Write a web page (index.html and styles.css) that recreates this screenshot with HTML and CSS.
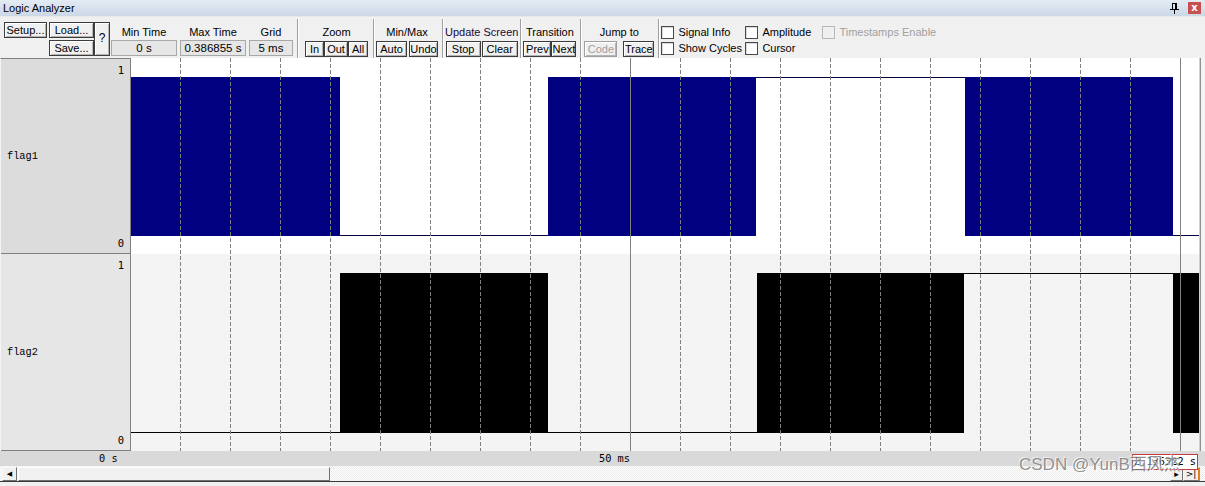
FILE: index.html
```html
<!DOCTYPE html>
<html>
<head>
<meta charset="utf-8">
<title>Logic Analyzer</title>
<link rel="stylesheet" href="styles.css">
</head>
<body>
<div class="titlebar">
  <span class="title">Logic Analyzer</span>
  <span class="tb-icons">
    <svg class="pin" width="9" height="11" viewBox="0 0 9 11"><rect x="2.5" y="0.5" width="4" height="6" fill="none" stroke="#000"/><rect x="5" y="0" width="2" height="7" fill="#000"/><rect x="0" y="6" width="9" height="1" fill="#000"/><rect x="4" y="7" width="1" height="4" fill="#000"/></svg>
    <span class="close">x</span>
  </span>
</div>
<div class="toolbar">
  <div class="g-setup">
    <div class="btn b-setup">Setup...</div>
    <div class="btn b-load">Load...</div>
    <div class="btn b-help">?</div>
    <div class="btn b-save">Save...</div>
  </div>
  <div class="field f-min"><div class="lbl">Min Time</div><div class="val">0 s</div></div>
  <div class="field f-max"><div class="lbl">Max Time</div><div class="val">0.386855 s</div></div>
  <div class="field f-grid"><div class="lbl">Grid</div><div class="val">5 ms</div></div>
  <div class="sep s1"></div>
  <div class="grp g-zoom">
    <div class="lbl">Zoom</div>
    <div class="row"><div class="btn w19">In</div><div class="btn w24">Out</div><div class="btn w20">All</div></div>
  </div>
  <div class="sep s2"></div>
  <div class="grp g-minmax">
    <div class="lbl">Min/Max</div>
    <div class="row gap2"><div class="btn w31">Auto</div><div class="btn w29">Undo</div></div>
  </div>
  <div class="sep s3"></div>
  <div class="grp g-update">
    <div class="lbl lbl-up">Update Screen</div>
    <div class="row gap1"><div class="btn w35">Stop</div><div class="btn w36">Clear</div></div>
  </div>
  <div class="sep s4"></div>
  <div class="grp g-trans">
    <div class="lbl">Transition</div>
    <div class="row"><div class="btn w28">Prev</div><div class="btn w25">Next</div></div>
  </div>
  <div class="sep s5"></div>
  <div class="grp g-jump">
    <div class="lbl">Jump to</div>
    <div class="row gap6"><div class="btn w33 disabled">Code</div><div class="btn w31">Trace</div></div>
  </div>
  <div class="sep s6"></div>
  <div class="checks">
    <label class="chk"><span class="box"></span>Signal Info</label>
    <label class="chk"><span class="box"></span>Amplitude</label>
    <label class="chk dis"><span class="box"></span>Timestamps Enable</label>
    <label class="chk"><span class="box"></span>Show Cycles</label>
    <label class="chk"><span class="box"></span>Cursor</label>
  </div>
</div>
<div class="main">
  <div class="labels">
    <div class="sig r1"><span class="one">1</span><span class="name">flag1</span><span class="zero">0</span></div>
    <div class="sig r2"><span class="one">1</span><span class="name">flag2</span><span class="zero">0</span></div>
  </div>
  <div class="wave">
    <svg width="1068" height="393" viewBox="0 0 1068 393">
      <rect x="0" y="0" width="1068" height="196" fill="#ffffff"/>
      <rect x="0" y="196" width="1068" height="197" fill="#f4f4f4"/>
      <!-- flag1 -->
      <rect x="0" y="19" width="209" height="159" fill="#000080"/>
      <rect x="417" y="19" width="208" height="159" fill="#000080"/>
      <rect x="834" y="19" width="208" height="159" fill="#000080"/>
      <path d="M209 177.5H417M625 19.5H834M1042 177.5H1068" stroke="#000040" stroke-width="1" fill="none"/>
      <!-- flag2 -->
      <rect x="209" y="215" width="208" height="160" fill="#000"/>
      <rect x="626" y="215" width="207" height="160" fill="#000"/>
      <rect x="1042" y="215" width="26" height="160" fill="#000"/>
      <path d="M0 374.5H209M417 374.5H626M833 215.5H1042" stroke="#000" stroke-width="1" fill="none"/>
      <!-- grid -->
      <path d="M49.5 0V393M99.5 0V393M149.5 0V393M199.5 0V393M249.5 0V393M299.5 0V393M349.5 0V393M399.5 0V393M449.5 0V393M549.5 0V393M599.5 0V393M649.5 0V393M699.5 0V393M749.5 0V393M799.5 0V393M849.5 0V393M899.5 0V393M949.5 0V393M999.5 0V393" stroke="#808080" stroke-width="1" stroke-dasharray="4 2" fill="none"/>
      <path d="M499.5 0V393M1049.5 0V393" stroke="#808080" stroke-width="1" fill="none"/>
    </svg>
  </div>
  <div class="vstrip"></div>
</div>
<div class="axis">
  <span class="tick t0">0 s</span>
  <span class="tick t50">50 ms</span>
</div>
<div class="hscroll">
  <div class="sbtn left">&#9664;</div>
  <div class="thumb"></div>
  <div class="track"></div>
  <div class="rbtns"><div class="sbtn small">&#9656;</div><div class="sbtn small2">&gt;|</div></div>
</div>
<div class="bottom"></div>
<div class="cursorval">2.136322 s</div>
<div class="watermark">CSDN @YunB西风杰</div>
</body>
</html>
```
FILE: styles.css
```css
html, body {
  margin: 0;
  padding: 0;
}
body {
  width: 1205px;
  height: 486px;
  overflow: hidden;
  background: #f0f0f0;
  font-family: "Liberation Sans", Arial, sans-serif;
  font-size: 11px;
  color: #000;
  position: relative;
}

/* title bar */
.titlebar {
  height: 16px;
  border-bottom: 1px solid #e6eaef;
  background: linear-gradient(#e3ebf4, #cbd8e6);
  display: flex;
  align-items: center;
  justify-content: space-between;
  padding-left: 3px;
}
.title {
  font-size: 11px;
  line-height: 16px;
}
.tb-icons {
  display: flex;
  align-items: center;
  gap: 9px;
  margin-right: 4px;
}
.pin {
  display: block;
}
.close {
  width: 13px;
  height: 12px;
  background: #c75050;
  color: #fff;
  font-weight: bold;
  font-size: 10px;
  line-height: 11px;
  text-align: center;
  font-family: "DejaVu Sans", sans-serif;
}

/* toolbar */
.toolbar {
  height: 41px;
  display: flex;
  align-items: flex-start;
  background: #f0f0f0;
}
.btn {
  box-sizing: border-box;
  height: 16px;
  border: 1px solid #3c3c3c;
  box-shadow: inset 1px 1px 0 #ffffff, inset -1px -1px 0 #b4b4b4;
  background: #f0f0f0;
  text-align: center;
  line-height: 14px;
  white-space: nowrap;
  overflow: hidden;
}
.btn.disabled {
  color: #a0a0a0;
  border-color: #a0a0a0;
}
.g-setup {
  margin-left: 4px;
  margin-top: 5px;
  display: grid;
  grid-template-columns: 43px 2px 45px 16px;
  grid-template-rows: 16px 16px;
  row-gap: 2px;
}
.b-setup { grid-column: 1; grid-row: 1; }
.b-load { grid-column: 3; grid-row: 1; }
.b-save { grid-column: 3; grid-row: 2; }
.b-help { grid-column: 4; grid-row: 1 / span 2; height: 34px; line-height: 30px; font-size: 12px; }

.field {
  margin-top: 6px;
  display: flex;
  flex-direction: column;
}
.field .lbl {
  height: 17px;
  line-height: 18px;
  text-align: center;
  white-space: nowrap;
}
.val {
  box-sizing: border-box;
  height: 16px;
  border: 1px solid #a8a8a8;
  background: #e6e6e6;
  text-align: center;
  line-height: 14px;
  white-space: nowrap;
  font-size: 11.5px;
}
.f-min { margin-left: 1px; width: 66px; }
.f-max { margin-left: 3px; width: 66px; }
.f-grid { margin-left: 3px; width: 44px; }

.sep {
  width: 1px;
  height: 39px;
  margin-top: 2px;
  background: #a0a0a0;
  box-shadow: 1px 0 0 #ffffff;
}
.s1 { margin-left: 4px; }
.s2 { margin-left: 5px; }
.s3 { margin-left: 4px; }
.s4 { margin-left: 2px; }
.s5 { margin-left: 4px; }
.s6 { margin-left: 4px; }

.grp {
  margin-top: 6px;
  display: flex;
  flex-direction: column;
  align-items: center;
}
.grp .lbl {
  height: 18px;
  line-height: 18px;
  white-space: nowrap;
}
.lbl-up { color: #1a0a3a; }
.row {
  display: flex;
}
.gap1 { gap: 1px; }
.gap2 { gap: 2px; }
.gap6 { gap: 6px; }
.g-zoom { margin-left: 7px; }
.g-minmax { margin-left: 2px; }
.g-update { margin-left: 2px; }
.g-trans { margin-left: 2px; }
.g-jump { margin-left: 3px; }

.w19 { width: 19px; }
.w20 { width: 20px; }
.w24 { width: 24px; }
.w25 { width: 25px; }
.w28 { width: 28px; }
.w29 { width: 29px; }
.w31 { width: 31px; }
.w33 { width: 33px; }
.w35 { width: 35px; }
.w36 { width: 36px; }

.checks {
  margin-left: 2px;
  margin-top: 7px;
  display: grid;
  grid-template-columns: 84px 77px auto;
  grid-auto-rows: 16px;
}
.chk {
  display: flex;
  align-items: center;
  gap: 4px;
  white-space: nowrap;
  font-size: 11px;
}
.box {
  box-sizing: border-box;
  width: 13px;
  height: 13px;
  border: 1px solid #4a4a4a;
  background: #fff;
  box-shadow: inset 1px 1px 0 #d8d8d8;
}
.chk.dis {
  color: #a0a0a0;
}
.chk.dis .box {
  border-color: #b8b8b8;
  background: #f0f0f0;
  box-shadow: none;
}

/* main area */
.main {
  height: 393px;
  display: flex;
}
.labels {
  box-sizing: border-box;
  width: 131px;
  border-top: 1px solid #808080;
  border-right: 1px solid #808080;
  border-left: 1px solid #f4f4f4;
  display: flex;
  flex-direction: column;
}
.sig {
  box-sizing: border-box;
  border-bottom: 1px solid #808080;
  position: relative;
  display: flex;
  align-items: center;
  padding-left: 6px;
  font-family: "Liberation Mono", "Courier New", monospace;
  font-size: 10.3px;
}
.r1 { height: 195px; background: #dcdcdc; }
.r2 { height: 197px; background: #e6e6e6; }
.one, .zero {
  position: absolute;
  right: 6px;
  font-family: "DejaVu Sans Mono", monospace;
  font-size: 10.5px;
  line-height: 12px;
}
.one { top: 5px; }
.zero { bottom: 4px; }

.wave {
  width: 1068px;
  height: 393px;
}
.wave svg {
  display: block;
}
.vstrip {
  flex: 1;
  background: #f4f4f4;
  border-left: 1px solid #d0d0d0;
  box-shadow: inset 1px 0 0 #909090;
}

/* time axis */
.axis {
  height: 15px;
  background: #d9d9d9;
  position: relative;
  font-family: "DejaVu Sans Mono", monospace;
  font-size: 10.3px;
}
.tick {
  position: absolute;
  top: 1px;
  line-height: 13px;
  white-space: nowrap;
}
.t0 { left: 99px; }
.t50 { left: 599px; }

/* horizontal scrollbar */
.hscroll {
  box-sizing: border-box;
  height: 16px;
  display: flex;
  padding-left: 2px;
  padding-top: 1px;
  border-bottom: 1px solid #3a3a3a;
  background: repeating-conic-gradient(#ffffff 0 25%, #ebebeb 0 50%) 0 0 / 2px 2px;
}
.sbtn {
  box-sizing: border-box;
  height: 14px;
  background: #f0f0f0;
  border: 1px solid #f8f8f8;
  border-right-color: #707070;
  border-bottom-color: #707070;
  font-size: 7px;
  line-height: 12px;
  text-align: center;
  color: #000;
  font-family: "DejaVu Sans", sans-serif;
}
.sbtn.left { width: 15px; }
.thumb {
  box-sizing: border-box;
  width: 312px;
  height: 14px;
  background: #f0f0f0;
  border: 1px solid #ffffff;
  border-right-color: #707070;
  border-bottom-color: #707070;
  margin-left: 1px;
}
.track { flex: 1; }
.rbtns {
  display: flex;
  margin-right: 5px;
}
.sbtn.small { width: 13px; font-size: 9px; }
.sbtn.small2 { width: 17px; font-size: 9px; border-right: 2px solid #e08020; }
.bottom {
  height: 4px;
  background: #f0f0f0;
}

/* overlays */
.cursorval {
  position: absolute;
  left: 1132px;
  top: 454px;
  box-sizing: border-box;
  width: 66px;
  height: 16px;
  border: 1px solid #c83c3c;
  background: #ffffff;
  font-family: "DejaVu Sans Mono", monospace;
  font-size: 10.3px;
  line-height: 13px;
  padding-left: 1px;
  white-space: nowrap;
}
.watermark {
  position: absolute;
  left: 1019px;
  top: 454px;
  font-family: "Liberation Sans", "Noto Sans CJK SC", sans-serif;
  font-size: 17px;
  line-height: 22px;
  color: rgba(110, 110, 110, 0.75);
  text-shadow: 1px 1px 0 rgba(255,255,255,0.8), -1px -1px 0 rgba(255,255,255,0.6);
  white-space: nowrap;
  pointer-events: none;
}
```
